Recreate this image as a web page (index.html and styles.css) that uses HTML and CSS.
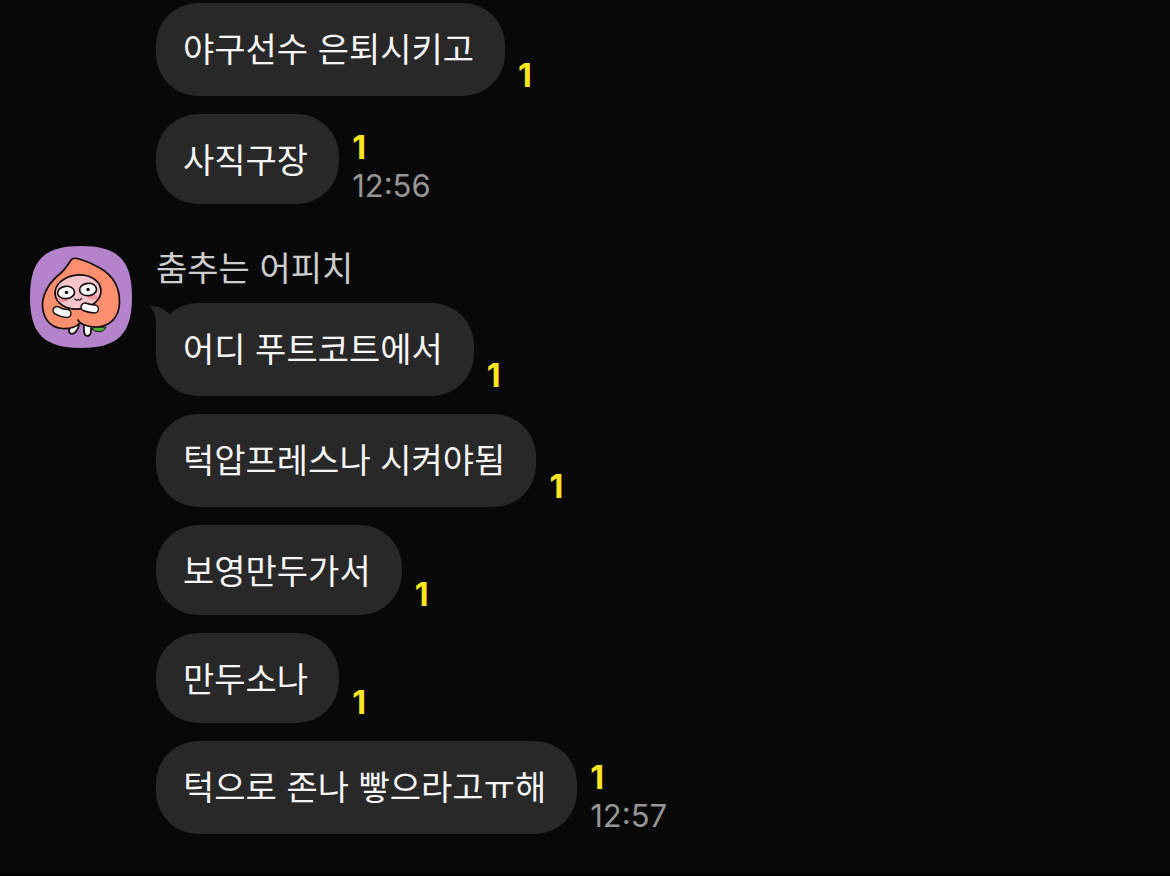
FILE: index.html
```html
<!DOCTYPE html>
<html lang="ko">
<head>
    <meta charset="UTF-8">
    <meta name="viewport" content="width=device-width, initial-scale=1.0">
    <title>채팅</title>
    <link rel="stylesheet" href="styles.css">
</head>
<body>

    <main class="chat">
        <section class="group">
            <div class="content">
                <div class="message">
                    <p class="bubble tall">야구선수 은퇴시키고</p>
                    <div class="meta"><span class="unread">1</span></div>
                </div>
                <div class="message">
                    <p class="bubble">사직구장</p>
                    <div class="meta"><span class="unread">1</span><time>12:56</time></div>
                </div>
            </div>
        </section>

        <section class="group">
            <svg class="avatar" viewBox="0 0 102 102" role="img" aria-label="어피치">
                <path fill="#b583cc" d="M51 0C88 0 102 14 102 51S88 102 51 102 0 88 0 51 14 0 51 0Z"/>
                <g stroke="#120c0c" stroke-width="1.7" stroke-linecap="round" stroke-linejoin="round">
                    <path fill="#4fae3c" stroke-width="1" d="M62 83C66 79 71 82 76 81C74 87 66 87 62 83Z"/>
                    <path fill="#fff" d="M41 80C38 84 38 87 42 88C46 87 48 83 49 79Z"/>
                    <path fill="#fff" d="M54 79C54 84 53 89 57 90C62 90 61 84 61 79Z"/>
                    <path fill="#ff8f6f" d="M42 13C45 11 49 13 52 14C59 16 64 19 70 22C82 29 90 41 89.500 57C89 72 79 81 66 81C60 81 54 79 50 77C46 81 39 83 32 82.500C19 81 12 71 12.500 57C14 43 22 34 31 27C37 22 39 16 42 13Z"/>
                    <path fill="none" d="M48 74C49 76 50 77 51 77"/>
                    <ellipse cx="48" cy="46" rx="23" ry="17" transform="rotate(-6 48 46)" fill="#fac4cc"/>
                </g>
                <ellipse cx="33" cy="53.500" rx="5" ry="2.500" fill="#f3969f"/>
                <ellipse cx="63" cy="51" rx="5" ry="2.500" fill="#f3969f"/>
                <g fill="#fff" stroke="#120c0c" stroke-width="1.7">
                    <ellipse cx="36" cy="46.500" rx="8.500" ry="6.200" transform="rotate(-5 36 46)"/>
                    <ellipse cx="58" cy="43.500" rx="8.500" ry="6.200" transform="rotate(-5 58 43)"/>
                </g>
                <g fill="none" stroke-linecap="round">
                    <path stroke="#120c0c" stroke-width="9.400" d="M27 64.500Q31 67 37 67.500M55 61Q59 62.500 64.500 63"/>
                    <path stroke="#fff" stroke-width="6.400" d="M27 64.500Q31 67 37 67.500M55 61Q59 62.500 64.500 63"/>
                </g>
                <path d="M45 53Q46 55 48 53.500Q50 55 51.500 52.500" fill="none" stroke="#120c0c" stroke-width="1.200" stroke-linecap="round"/>
                <circle cx="36.500" cy="46.500" r="1.700" fill="#120c0c"/>
                <circle cx="58" cy="43.500" r="1.700" fill="#120c0c"/>
            </svg>
            <div class="content">
                <h2 class="name">춤추는 어피치</h2>
                <div class="message">
                    <p class="bubble tall">
                        <svg class="tail" viewBox="0 0 22 44" aria-hidden="true">
                            <path fill="#282828" d="M0 3C8 3 14 5 19 11L22 30V44H6V22C6 14 4 8 0 3Z"/>
                        </svg>
                        어디 푸트코트에서
                    </p>
                    <div class="meta"><span class="unread">1</span></div>
                </div>
                <div class="message">
                    <p class="bubble tall">턱압프레스나 시켜야됨</p>
                    <div class="meta"><span class="unread">1</span></div>
                </div>
                <div class="message">
                    <p class="bubble">보영만두가서</p>
                    <div class="meta"><span class="unread">1</span></div>
                </div>
                <div class="message">
                    <p class="bubble">만두소나</p>
                    <div class="meta"><span class="unread">1</span></div>
                </div>
                <div class="message">
                    <p class="bubble tall">턱으로 존나 빻으라고ㅠ해</p>
                    <div class="meta"><span class="unread">1</span><time>12:57</time></div>
                </div>
            </div>
        </section>
    </main>

</body>
</html>
```
FILE: styles.css
```css
* {
    box-sizing: border-box;
}
body {
    margin: 0;
    min-height: 100vh;
    background-color: #080808;
    border-bottom: 2px solid #000;
    color: #f5f5f5;
    font-family: Inter, "Noto Sans CJK KR", sans-serif;
    font-size: 34px;
}
.chat {
    display: flex;
    flex-direction: column;
    gap: 42px;
    padding: 3px 30px 0;
}
.group {
    display: grid;
    grid-template-columns: 102px 1fr;
    column-gap: 24px;
}
.avatar {
    width: 102px;
    height: 102px;
}
.content {
    grid-column: 2;
    display: flex;
    flex-direction: column;
    gap: 18px;
}
.name {
    margin: 0 0 -9px;
    height: 48px;
    font-size: 34px;
    font-weight: 400;
    line-height: 46px;
    color: #cdcdcd;
}
.message {
    display: flex;
    gap: 13px;
}
.bubble {
    position: relative;
    margin: 0;
    min-height: 90px;
    padding: 25px 31px 17px 27px;
    border-radius: 42px;
    background-color: #282828;
    line-height: 44px;
}
.bubble.tall {
    min-height: 93px;
}
.tail {
    position: absolute;
    top: 0;
    left: -6px;
    width: 22px;
    height: 44px;
}
.meta {
    display: flex;
    flex-direction: column;
    justify-content: flex-end;
}
.unread {
    font-size: 32px;
    font-weight: 700;
    line-height: 40px;
    color: #fee51e;
}
time {
    font-size: 31px;
    line-height: 36px;
    color: #969696;
}
```
